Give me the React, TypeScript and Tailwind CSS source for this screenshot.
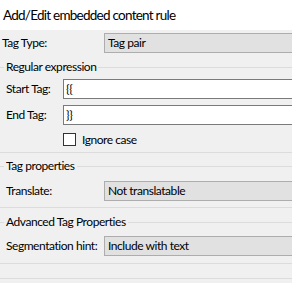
import React from "react"

function Legend({ title }: { title: string }) {
    return (
        <div className="flex items-center h-[14px]">
            <div className="w-[4px] h-px bg-[#dcdcdc]" />
            <span className="px-[2px] leading-[14px]">{title}</span>
            <div className="flex-1 h-px bg-[#dcdcdc]" />
        </div>
    )
}

function Combo({ value }: { value: string }) {
    return (
        <div className="flex-1 -mr-[10px] h-[20px] border border-[#adadad] bg-[#e1e1e1] flex items-center pl-[3px] leading-none">
            {value}
        </div>
    )
}

function TextBox({ value }: { value: string }) {
    return (
        <div className="flex-1 -mr-[10px] h-[20px] border border-[#7a7a7a] bg-white flex items-center pl-[2px] leading-none">
            {value}
        </div>
    )
}

export default function App() {
    return (
        <div
            className="w-[292px] h-[283px] overflow-hidden bg-[#f0f0f0] text-black text-[12px] tracking-[-0.45px] whitespace-nowrap"
            style={{ fontFamily: 'Lato, "Liberation Sans", Arial, sans-serif' }}
        >
            {/* Header */}
            <div className="h-[30px] bg-white flex items-center pl-[3px] text-[13.5px] tracking-[-0.75px]">
                Add/Edit embedded content rule
            </div>

            <div className="mt-[3px] flex items-center">
                <div className="w-[104px] pl-[2px]">Tag Type:</div>
                <Combo value="Tag pair" />
            </div>

            {/* Regular expression */}
            <div className="mt-[7px]">
                <Legend title="Regular expression" />
            </div>
            <div className="mt-[5px] flex items-center">
                <div className="w-[63px] pl-[6px]">Start Tag:</div>
                <TextBox value="{{" />
            </div>
            <div className="mt-[6px] flex items-center">
                <div className="w-[63px] pl-[6px]">End Tag:</div>
                <TextBox value="}}" />
            </div>
            <div className="mt-[8px] flex items-center h-[13px] pl-[63px] gap-[6px]">
                <div className="w-[13px] h-[13px] border border-[#333333] bg-white" />
                <span>Ignore case</span>
            </div>
            <div className="mt-[6px] h-px bg-[#dcdcdc]" />

            {/* Tag properties */}
            <div className="mt-[6px]">
                <Legend title="Tag properties" />
            </div>
            <div className="mt-[8px] flex items-center">
                <div className="w-[104px] pl-[6px]">Translate:</div>
                <Combo value="Not translatable" />
            </div>
            <div className="mt-[6px] h-px bg-[#dcdcdc]" />

            {/* Advanced */}
            <div className="mt-[7px]">
                <Legend title="Advanced Tag Properties" />
            </div>
            <div className="mt-[7px] flex items-center">
                <div className="w-[104px] pl-[6px]">Segmentation hint:</div>
                <Combo value="Include with text" />
            </div>
            <div className="mt-[7px] h-px bg-[#dcdcdc]" />
            <div className="mt-[14px] h-px bg-[#dcdcdc]" />
        </div>
    )
}
